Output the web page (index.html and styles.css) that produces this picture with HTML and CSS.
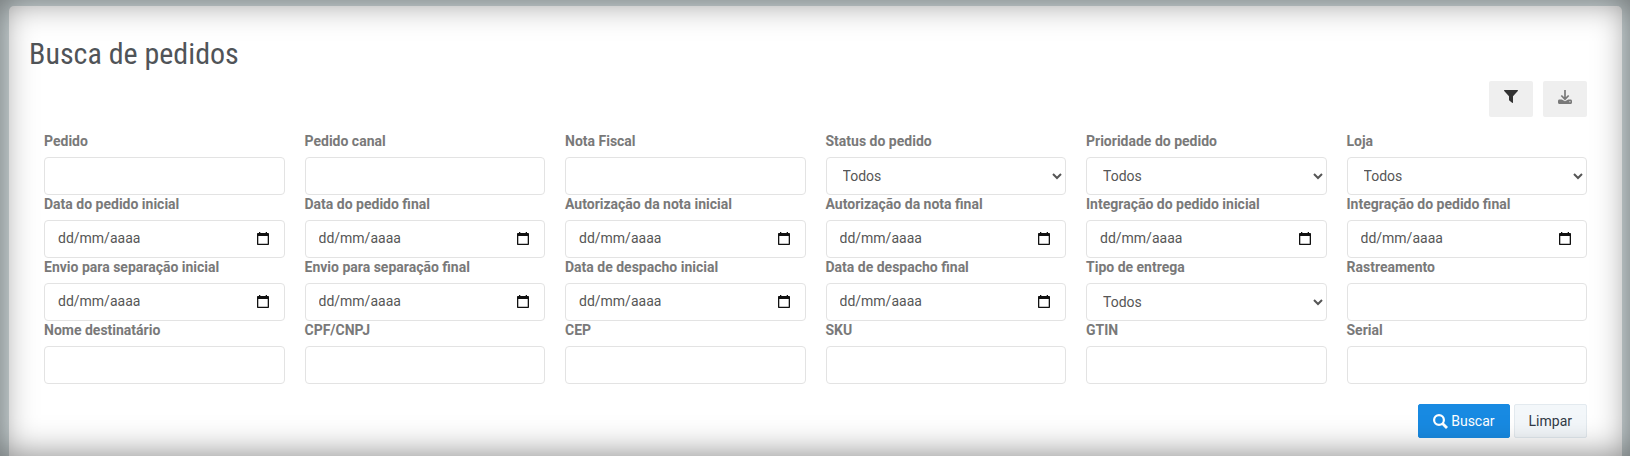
FILE: index.html
```html
<!DOCTYPE html>
<html lang="pt-BR">
<head>
  <meta charset="UTF-8">
  <title>Busca de pedidos</title>
  <meta name="viewport" content="width=device-width, initial-scale=1">
  <link rel="stylesheet" href="styles.css">
</head>
<body>
  <svg class="sprite" aria-hidden="true">
    <symbol id="icon-calendar" viewBox="0 0 12 13">
      <path d="M2 0h1.300v1h5.400V0H10v1h1c.6 0 1 .4 1 1v10c0 .6-.4 1-1 1H1c-.6 0-1-.4-1-1V2c0-.6.4-1 1-1h1zM1.300 4v7.700h9.400V4z" fill-rule="evenodd"/>
    </symbol>
  </svg>

  <main class="card">
    <h1 class="card-title">Busca de pedidos</h1>

    <div class="toolbar">
      <button type="button" class="tool-button tool-filter" aria-label="Filtrar">
        <svg viewBox="0 0 14 13" width="14" height="13"><path d="M.6 0h12.800c.6 0 .8.700.4 1.100L9 6.200v6.200c0 .5-.5.700-.9.400L5.300 10.600 5 10V6.200L.2 1.100C-.2.700 0 0 .6 0z"/></svg>
      </button>
      <button type="button" class="tool-button tool-export" aria-label="Exportar">
        <svg viewBox="0 0 14 14" width="14" height="14"><path d="M7 0v8.500M3.300 5.500L7 9.200l3.700-3.700" fill="none" stroke="currentColor" stroke-width="1.700"/><path d="M1.500 9.500h2.300L7 11.200l3.200-1.700h2.300c.9 0 1.500.6 1.500 1.500v1.500c0 .9-.6 1.500-1.500 1.500h-11C.6 14 0 13.400 0 12.500V11c0-.9.6-1.500 1.500-1.500zm9.800 1.700v1h1.200v-1z" fill-rule="evenodd"/></svg>
      </button>
    </div>

    <form class="search-form">
      <div class="fields">
        <div class="field">
          <label for="pedido">Pedido</label>
          <input type="text" id="pedido" class="control">
        </div>
        <div class="field">
          <label for="pedido-canal">Pedido canal</label>
          <input type="text" id="pedido-canal" class="control">
        </div>
        <div class="field">
          <label for="nota-fiscal">Nota Fiscal</label>
          <input type="text" id="nota-fiscal" class="control">
        </div>
        <div class="field">
          <label for="status">Status do pedido</label>
          <select id="status" class="control"><option>Todos</option></select>
        </div>
        <div class="field">
          <label for="prioridade">Prioridade do pedido</label>
          <select id="prioridade" class="control"><option>Todos</option></select>
        </div>
        <div class="field">
          <label for="loja">Loja</label>
          <select id="loja" class="control"><option>Todos</option></select>
        </div>

        <div class="field">
          <label for="pedido-inicial">Data do pedido inicial</label>
          <div class="control date"><input type="text" id="pedido-inicial" placeholder="dd/mm/aaaa"><svg class="calendar"><use href="#icon-calendar"/></svg></div>
        </div>
        <div class="field">
          <label for="pedido-final">Data do pedido final</label>
          <div class="control date"><input type="text" id="pedido-final" placeholder="dd/mm/aaaa"><svg class="calendar"><use href="#icon-calendar"/></svg></div>
        </div>
        <div class="field">
          <label for="nota-inicial">Autorização da nota inicial</label>
          <div class="control date"><input type="text" id="nota-inicial" placeholder="dd/mm/aaaa"><svg class="calendar"><use href="#icon-calendar"/></svg></div>
        </div>
        <div class="field">
          <label for="nota-final">Autorização da nota final</label>
          <div class="control date"><input type="text" id="nota-final" placeholder="dd/mm/aaaa"><svg class="calendar"><use href="#icon-calendar"/></svg></div>
        </div>
        <div class="field">
          <label for="integracao-inicial">Integração do pedido inicial</label>
          <div class="control date"><input type="text" id="integracao-inicial" placeholder="dd/mm/aaaa"><svg class="calendar"><use href="#icon-calendar"/></svg></div>
        </div>
        <div class="field">
          <label for="integracao-final">Integração do pedido final</label>
          <div class="control date"><input type="text" id="integracao-final" placeholder="dd/mm/aaaa"><svg class="calendar"><use href="#icon-calendar"/></svg></div>
        </div>

        <div class="field">
          <label for="separacao-inicial">Envio para separação inicial</label>
          <div class="control date"><input type="text" id="separacao-inicial" placeholder="dd/mm/aaaa"><svg class="calendar"><use href="#icon-calendar"/></svg></div>
        </div>
        <div class="field">
          <label for="separacao-final">Envio para separação final</label>
          <div class="control date"><input type="text" id="separacao-final" placeholder="dd/mm/aaaa"><svg class="calendar"><use href="#icon-calendar"/></svg></div>
        </div>
        <div class="field">
          <label for="despacho-inicial">Data de despacho inicial</label>
          <div class="control date"><input type="text" id="despacho-inicial" placeholder="dd/mm/aaaa"><svg class="calendar"><use href="#icon-calendar"/></svg></div>
        </div>
        <div class="field">
          <label for="despacho-final">Data de despacho final</label>
          <div class="control date"><input type="text" id="despacho-final" placeholder="dd/mm/aaaa"><svg class="calendar"><use href="#icon-calendar"/></svg></div>
        </div>
        <div class="field">
          <label for="tipo-entrega">Tipo de entrega</label>
          <select id="tipo-entrega" class="control"><option>Todos</option></select>
        </div>
        <div class="field">
          <label for="rastreamento">Rastreamento</label>
          <input type="text" id="rastreamento" class="control">
        </div>

        <div class="field">
          <label for="destinatario">Nome destinatário</label>
          <input type="text" id="destinatario" class="control">
        </div>
        <div class="field">
          <label for="documento">CPF/CNPJ</label>
          <input type="text" id="documento" class="control">
        </div>
        <div class="field">
          <label for="cep">CEP</label>
          <input type="text" id="cep" class="control">
        </div>
        <div class="field">
          <label for="sku">SKU</label>
          <input type="text" id="sku" class="control">
        </div>
        <div class="field">
          <label for="gtin">GTIN</label>
          <input type="text" id="gtin" class="control">
        </div>
        <div class="field">
          <label for="serial">Serial</label>
          <input type="text" id="serial" class="control">
        </div>
      </div>

      <div class="actions">
        <button type="submit" class="btn btn-primary">
          <svg viewBox="0 0 15 15" width="15" height="15"><circle cx="6" cy="6" r="4.900" fill="none" stroke="currentColor" stroke-width="2.200"/><path d="M9.500 9.500l4.500 4.500" stroke="currentColor" stroke-width="2.800"/></svg>
          Buscar
        </button>
        <button type="reset" class="btn btn-light">Limpar</button>
      </div>
    </form>
  </main>
</body>
</html>
```

FILE: styles.css
```css
* {
  box-sizing: border-box;
}

body {
  margin: 0;
  padding: 6px 8px 0 9px;
  min-height: 100vh;
  display: flex;
  background: #d0dadc;
  font-family: Roboto, "Liberation Sans", sans-serif;
  font-size: 14px;
  color: #797979;
}

/* dark vignette round the window */
body::after {
  content: "";
  position: fixed;
  inset: 0;
  box-shadow: inset 0 0 34px rgba(0, 0, 0, 0.5);
  pointer-events: none;
}

.sprite {
  display: none;
}

.card {
  flex: 1;
  padding: 30px 35px 18px;
  background: #fff;
  border-radius: 5px 5px 0 0;
}

.card-title {
  margin: 0 0 9px -15px;
  font-family: "Roboto Condensed", Roboto, sans-serif;
  font-size: 30px;
  font-weight: 400;
  line-height: 36px;
  color: #505458;
}

.toolbar {
  display: flex;
  justify-content: flex-end;
  gap: 10px;
  margin-bottom: 15px;
}

.tool-button {
  display: flex;
  justify-content: center;
  width: 44px;
  height: 36px;
  padding: 9px 0 0;
  border: 0;
  border-radius: 2px;
  background: #efefef;
  color: #797979;
  cursor: pointer;
}

.tool-filter {
  color: #333;
}

.tool-button svg,
.btn svg {
  fill: currentColor;
}

.fields {
  display: grid;
  grid-template-columns: repeat(6, 1fr);
  column-gap: 20px;
}

.field label {
  display: block;
  height: 25px;
  line-height: 18px;
  font-weight: 700;
}

.control {
  display: block;
  width: 100%;
  height: 38px;
  padding: 0 13px;
  border: 1px solid #e3e3e3;
  border-radius: 4px;
  background: #fff;
  color: #565656;
  font: inherit;
}

select.control {
  padding: 0 0 0 12px;
}

.date {
  display: flex;
  align-items: center;
  justify-content: space-between;
  padding: 0 15px 2px 13px;
}

.date input {
  flex: 1;
  min-width: 0;
  padding: 0;
  border: 0;
  background: none;
  color: inherit;
  font: inherit;
}

.date input::placeholder {
  color: #565656;
}

.calendar {
  width: 12px;
  height: 13px;
  fill: #111;
}

.actions {
  display: flex;
  justify-content: flex-end;
  gap: 4px;
  margin-top: 20px;
}

.btn {
  display: flex;
  align-items: center;
  gap: 3px;
  height: 34px;
  padding: 0 14px;
  border: 1px solid #188ae2;
  border-radius: 2px;
  font: inherit;
  cursor: pointer;
}

.btn-primary {
  background: #188ae2;
  color: #fff;
}

.btn-light {
  background: #f3f7fa;
  border-color: #e3eaef;
  color: #323a46;
}
```
